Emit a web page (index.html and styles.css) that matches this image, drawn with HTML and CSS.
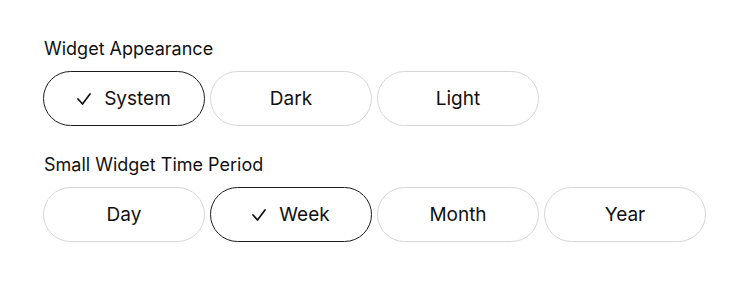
FILE: index.html
```html
<!DOCTYPE html>
<html lang="en">
<head>
<meta charset="utf-8">
<title>Widget Settings</title>
<link rel="stylesheet" href="styles.css">
</head>
<body>
<main class="settings">
  <section class="group">
    <h2 class="group-label">Widget Appearance</h2>
    <div class="options">
      <button class="option selected"><svg class="check" viewBox="0 0 14 12" width="14" height="12"><polyline points="1,6 5.5,11 13,1"/></svg>System</button>
      <button class="option">Dark</button>
      <button class="option">Light</button>
    </div>
  </section>
  <section class="group">
    <h2 class="group-label">Small Widget Time Period</h2>
    <div class="options">
      <button class="option">Day</button>
      <button class="option selected"><svg class="check" viewBox="0 0 14 12" width="14" height="12"><polyline points="1,6 5.5,11 13,1"/></svg>Week</button>
      <button class="option">Month</button>
      <button class="option">Year</button>
    </div>
  </section>
</main>
</body>
</html>
```
FILE: styles.css
```css
* { box-sizing: border-box; }
html, body { margin: 0; background: #ffffff; }
body {
  font-family: Inter, "Noto Sans", "Liberation Sans", sans-serif;
  color: #111111;
}
.settings {
  padding: 39px 0 0 43px;
  display: flex;
  flex-direction: column;
  gap: 29px;
}
.group-label {
  margin: 0 0 12px 1px;
  font-size: 18px;
  line-height: 20px;
  font-weight: 400;
  color: #111111;
}
.options {
  display: flex;
  gap: 5px;
}
.option {
  width: 162px;
  height: 55px;
  border: 1px solid #d6d6d6;
  border-radius: 28px;
  background: #ffffff;
  font-family: inherit;
  font-size: 19px;
  font-weight: 400;
  color: #111111;
  display: flex;
  align-items: center;
  justify-content: center;
  padding: 0;
}
.option.selected {
  border: 1.5px solid #1c1c1e;
}
.check {
  margin-right: 13px;
  fill: none;
  stroke: #111111;
  stroke-width: 1.7;
  stroke-linecap: round;
  stroke-linejoin: round;
}
```
